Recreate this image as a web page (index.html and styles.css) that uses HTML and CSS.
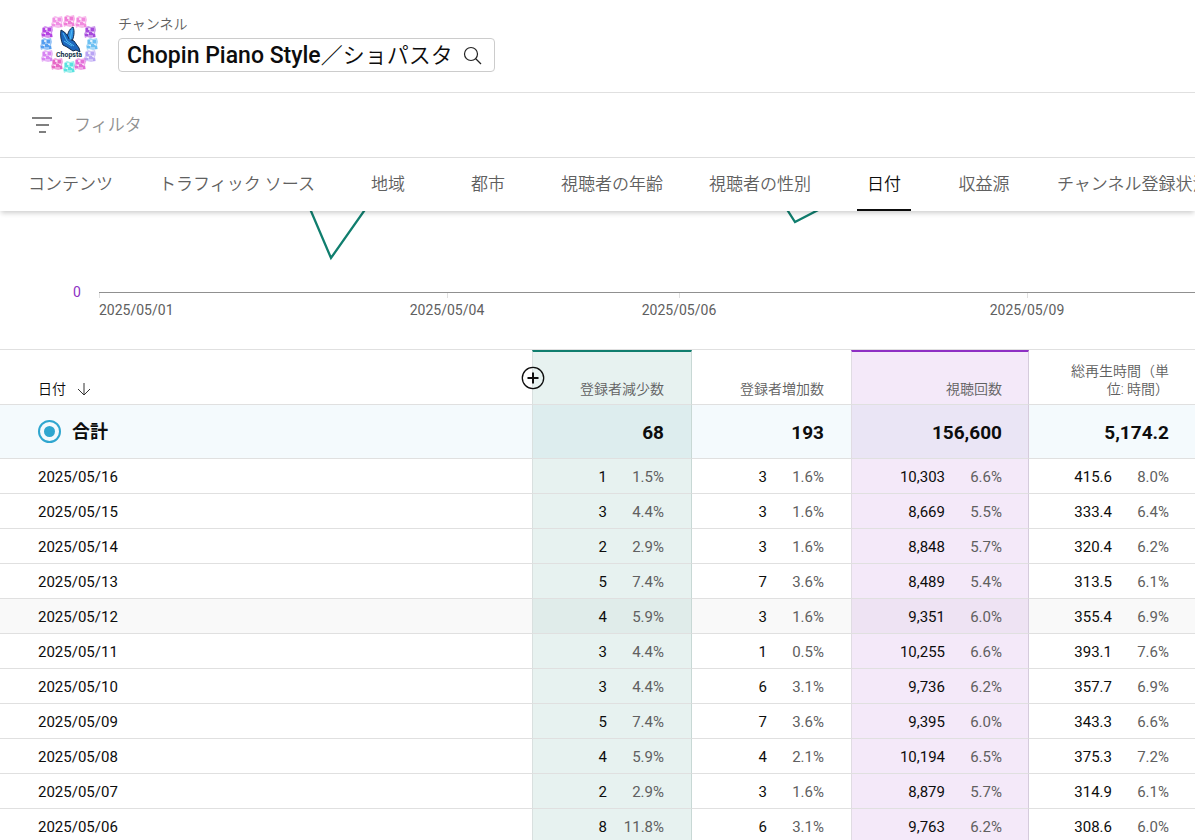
FILE: index.html
```
<!DOCTYPE html>
<html lang="ja">
<head>
  <meta charset="UTF-8" />
  <meta name="viewport" content="width=device-width, initial-scale=1" />
  <title>Chopin Piano Style／ショパスタ</title>
  <link rel="stylesheet" href="styles.css">
</head>
<body>

  <header class="channel">
    <svg class="channel-logo" viewBox="0 0 60 60" role="img" aria-label="Chopsta">
      <defs>
        <g id="tile">
          <path d="M-5-4-2-6 1-5 5-6 6-2 5 1 6 5 1 6-3 5-5 6-6 2-5 0Z" opacity=".6" />
          <path d="M-4-4h3v4h-3zM1-4h3v3H1zM-1 0h4v3h-4zM-5 2h3v2h-3zM3 2h2v3H3z" />
          <path d="M-2-4h2v2h-2zM2 0h2v1H2zM-3 1h2v1h-2z" fill="#fff" opacity=".7" />
        </g>
      </defs>
      <use href="#tile" x="18" y="8" fill="#f090e4" />
      <use href="#tile" x="30" y="7" fill="#f07cd6" />
      <use href="#tile" x="42" y="8" fill="#f28ade" />
      <use href="#tile" x="51" y="18" fill="#a64bdc" />
      <use href="#tile" x="53" y="30" fill="#6cc0f2" />
      <use href="#tile" x="51" y="42" fill="#b9a4f4" />
      <use href="#tile" x="41" y="50" fill="#e470d8" />
      <use href="#tile" x="30" y="53" fill="#5ae2e0" />
      <use href="#tile" x="18" y="50" fill="#e768c6" />
      <use href="#tile" x="8" y="42" fill="#d884f2" />
      <use href="#tile" x="7" y="30" fill="#559ff0" />
      <use href="#tile" x="8" y="18" fill="#b544e2" />
      <path d="M34 13c2 4 1 11-2 16l-4-2c0-7 2-12 6-14z" fill="#2c8ce0" stroke="#102a4c" />
      <path d="M22 16c4 2 7 5 8 9l5 2 5 7 1 4-4-2-3 1-6-4-4-2c-2-4-3-10-2-15z" fill="#1c66bd" stroke="#102a4c" />
      <path d="M33 16l-2 10M24 19l4 8 7 5M25 27l8 5" fill="none" stroke="#51bdf4" />
      <text class="logo-text" x="30" y="43" text-anchor="middle">Chopsta</text>
    </svg>
    <div class="channel-info">
      <span class="channel-label" id="channelLabel">チャンネル</span>
      <button type="button" class="channel-select" aria-describedby="channelLabel">
        <span>Chopin Piano Style<span class="channel-kana">／ショパスタ</span></span>
        <svg class="search-icon" viewBox="0 0 20 20" aria-hidden="true">
          <circle cx="8" cy="8" r="6.5" />
          <path d="M12.5 12.5l5.5 5.5" />
        </svg>
      </button>
    </div>
  </header>

  <div class="filter-bar">
    <svg class="filter-icon" viewBox="0 0 22 18" aria-hidden="true">
      <path d="M1 2h20M5 9h13M8 16h7" />
    </svg>
    <input class="filter-input" type="text" placeholder="フィルタ" aria-label="フィルタ">
  </div>

  <nav class="tabs">
    <a href="#">コンテンツ</a>
    <a href="#">トラフィック ソース</a>
    <a href="#">地域</a>
    <a href="#">都市</a>
    <a href="#">視聴者の年齢</a>
    <a href="#">視聴者の性別</a>
    <a href="#" class="active" aria-current="page">日付</a>
    <a href="#">収益源</a>
    <a href="#">チャンネル登録状況</a>
  </nav>

  <main>
    <svg class="chart" role="img" aria-label="日付別のグラフ">
      <polyline class="series" points="99,-60 215,-225 331,47 447,-118 563,-150 679,-171 795,11 911,-49 1027,-120" />
      <path class="ticks" d="M99.5 82v5M447.5 82v5M679.5 82v5M1027.5 82v5" />
      <line class="axis" x1="99" y1="81.5" x2="100%" y2="81.5" />
      <text class="zero" x="73" y="86">0</text>
      <text x="99" y="104">2025/05/01</text>
      <text x="447" y="104" text-anchor="middle">2025/05/04</text>
      <text x="679" y="104" text-anchor="middle">2025/05/06</text>
      <text x="1027" y="104" text-anchor="middle">2025/05/09</text>
    </svg>

    <table class="report">
      <colgroup>
        <col>
        <col class="col-lost">
        <col class="col-gained">
        <col class="col-views">
        <col class="col-hours">
      </colgroup>
      <thead>
        <tr>
          <th class="date">
            <span class="sort">日付
              <svg class="sort-icon" viewBox="0 0 14 14" aria-hidden="true"><path d="M7 1v12M1 7l6 6 6-6" /></svg>
            </span>
          </th>
          <th class="lost">
            <button type="button" class="add-metric" aria-label="指標を追加">
              <svg viewBox="0 0 24 24" aria-hidden="true"><circle cx="12" cy="12" r="10.7" /><path d="M12 6.500v11M6.500 12h11" /></svg>
            </button>
            登録者減少数
          </th>
          <th class="gained">登録者増加数</th>
          <th class="views">視聴回数</th>
          <th>総再生時間（単位: 時間）</th>
        </tr>
      </thead>
      <tbody id="reportRows">
        <tr class="total">
          <td class="date"><label><input type="radio" name="row" checked>合計</label></td>
          <td class="lost">68</td>
          <td class="gained">193</td>
          <td class="views">156,600</td>
          <td>5,174.2</td>
        </tr>
      </tbody>
    </table>
  </main>

<script>
  // date, then value / share for each metric
  const rows = [
    ['2025/05/16', '1', '1.5%', '3', '1.6%', '10,303', '6.6%', '415.6', '8.0%'],
    ['2025/05/15', '3', '4.4%', '3', '1.6%', '8,669', '5.5%', '333.4', '6.4%'],
    ['2025/05/14', '2', '2.9%', '3', '1.6%', '8,848', '5.7%', '320.4', '6.2%'],
    ['2025/05/13', '5', '7.4%', '7', '3.6%', '8,489', '5.4%', '313.5', '6.1%'],
    ['2025/05/12', '4', '5.9%', '3', '1.6%', '9,351', '6.0%', '355.4', '6.9%'],
    ['2025/05/11', '3', '4.4%', '1', '0.5%', '10,255', '6.6%', '393.1', '7.6%'],
    ['2025/05/10', '3', '4.4%', '6', '3.1%', '9,736', '6.2%', '357.7', '6.9%'],
    ['2025/05/09', '5', '7.4%', '7', '3.6%', '9,395', '6.0%', '343.3', '6.6%'],
    ['2025/05/08', '4', '5.9%', '4', '2.1%', '10,194', '6.5%', '375.3', '7.2%'],
    ['2025/05/07', '2', '2.9%', '3', '1.6%', '8,879', '5.7%', '314.9', '6.1%'],
    ['2025/05/06', '8', '11.8%', '6', '3.1%', '9,763', '6.2%', '308.6', '6.0%']
  ];
  const classes = ['lost', 'gained', 'views', 'hours'];
  const body = document.getElementById('reportRows');

  rows.forEach(row => {
    const tr = document.createElement('tr');
    if (row[0] === '2025/05/12') tr.className = 'highlight';
    let html = `<td class="date">${row[0]}</td>`;
    classes.forEach((name, i) => {
      html += `<td class="${name}">${row[i * 2 + 1]}<span class="share">${row[i * 2 + 2]}</span></td>`;
    });
    tr.innerHTML = html;
    body.appendChild(tr);
  });
</script>

</body>
</html>
```
FILE: styles.css
```
* {
  box-sizing: border-box;
}

body {
  margin: 0;
  height: 100vh;
  overflow: hidden;
  font-family: Roboto, "Noto Sans CJK JP", sans-serif;
  font-size: 15px;
  color: #0d0d0d;
  background: #fff;
}

button,
input {
  font: inherit;
  color: inherit;
}

.channel {
  display: flex;
  gap: 19px;
  padding: 14px 39px 18px;
  border-bottom: 1px solid #e0e0e0;
}

.channel-logo {
  width: 60px;
  height: 60px;
  flex: none;
}

.logo-text {
  font-size: 7px;
  font-weight: 700;
  fill: #12324a;
}

.channel-info {
  display: flex;
  flex-direction: column;
  align-items: flex-start;
  gap: 4px;
  height: 58px;
}

.channel-label {
  font-size: 14px;
  line-height: 20px;
  font-weight: 350;
  color: #606060;
}

.channel-select {
  display: flex;
  align-items: center;
  gap: 10px;
  height: 34px;
  padding: 1px 11px 0 8px;
  border: 1px solid #ccc;
  border-radius: 4px;
  background: #fff;
  font-size: 23px;
  line-height: 31px;
  font-weight: 500;
  white-space: nowrap;
  cursor: pointer;
}

.channel-kana {
  font-size: 22px;
  font-weight: 350;
}

.search-icon {
  width: 20px;
  height: 20px;
  fill: none;
  stroke: #222;
  stroke-width: 1.2;
}

.filter-bar {
  display: flex;
  align-items: center;
  gap: 21px;
  height: 65px;
  padding: 0 31px;
  border-bottom: 1px solid #e0e0e0;
}

.filter-icon {
  width: 22px;
  height: 18px;
  fill: none;
  stroke: #555;
  stroke-width: 1.6;
}

.filter-input {
  flex: 1;
  padding: 0;
  border: 0;
  outline: 0;
  font-size: 17px;
}

.filter-input::placeholder {
  color: #909090;
  opacity: 1;
  font-weight: 350;
}

.tabs {
  position: relative;
  display: flex;
  gap: 46px;
  height: 53px;
  padding-left: 28px;
  background: #fff;
  box-shadow: 0 3px 5px -1px rgba(0, 0, 0, 0.2);
}

.tabs a {
  flex: none;
  min-width: 54px;
  font-size: 17px;
  line-height: 53px;
  font-weight: 350;
  text-align: center;
  text-decoration: none;
  white-space: nowrap;
  color: #606060;
}

.tabs a.active {
  color: #0d0d0d;
  box-shadow: inset 0 -2px #0d0d0d;
}

.chart {
  display: block;
  width: 100%;
  height: 138px;
  font-size: 14px;
}

.chart text {
  fill: #606060;
}

.chart .zero {
  fill: #8e2fc4;
}

.series {
  fill: none;
  stroke: #107e6e;
  stroke-width: 2.3;
}

.axis {
  stroke: #909090;
}

.ticks {
  stroke: #e0e0e0;
}

/* report table */
.report {
  width: 100%;
  table-layout: fixed;
  border-collapse: separate;
  border-spacing: 0;
  border-top: 1px solid #e0e0e0;
}

.col-lost {
  width: 160px;
}

.col-gained {
  width: 159px;
}

.col-views {
  width: 178px;
}

.col-hours {
  width: 166px;
}

.report th,
.report td {
  padding: 0 26px 0 36px;
  border-bottom: 1px solid #e0e0e0;
  text-align: right;
  white-space: nowrap;
}

.report th {
  height: 55px;
  padding-bottom: 6px;
  vertical-align: bottom;
  font-size: 14px;
  line-height: 18px;
  font-weight: 350;
  white-space: normal;
  color: #606060;
}

.report td {
  height: 35px;
  padding-top: 2px;
  line-height: 20px;
}

.report .date {
  padding-left: 38px;
  text-align: left;
}

.report th.date {
  color: #0d0d0d;
}

.report .lost,
.report .gained {
  padding-right: 27px;
}

.report .lost {
  position: relative;
  background: #e7f2f0;
  border-left: 1px solid #d9e0df;
  border-right: 1px solid #c8d8d5;
}

.report .views {
  background: #f4e9f9;
  border-left: 1px solid #e0dce3;
  border-right: 1px solid #d5cbdc;
}

.report th.lost {
  border-top: 2px solid #107e6e;
}

.report th.views {
  border-top: 2px solid #8e2fc4;
}

.report .total td {
  height: 54px;
  font-size: 19px;
  font-weight: 700;
  background: #f4fafd;
}

.report .total .date {
  padding-top: 0;
}

.report .total .lost {
  background: #ddedee;
}

.report .total .views {
  background: #eae5f5;
}

.report .highlight td {
  background: #f9f9f9;
}

.report .highlight .lost {
  background: #e0ecea;
}

.report .highlight .views {
  background: #eee3f3;
}

.share {
  display: inline-block;
  width: 57px;
  color: #606060;
}

.sort {
  display: flex;
  align-items: center;
  gap: 11px;
}

.sort-icon {
  width: 14px;
  height: 14px;
  fill: none;
  stroke: #333;
}

.add-metric {
  position: absolute;
  top: 14px;
  left: -12px;
  width: 24px;
  height: 24px;
  padding: 0;
  border: 0;
  border-radius: 50%;
  background: none;
  cursor: pointer;
}

.add-metric svg {
  display: block;
  fill: none;
  stroke: #0d0d0d;
  stroke-width: 1.3;
}

.add-metric path {
  stroke-width: 2;
}

.total label {
  display: flex;
  align-items: center;
  gap: 11px;
  font-size: 18px;
}

.total input {
  appearance: none;
  width: 23px;
  height: 23px;
  margin: 0;
  padding: 4px;
  border: 2px solid #2fa6cf;
  border-radius: 50%;
  background: #2fa6cf;
  background-clip: content-box;
}
```
